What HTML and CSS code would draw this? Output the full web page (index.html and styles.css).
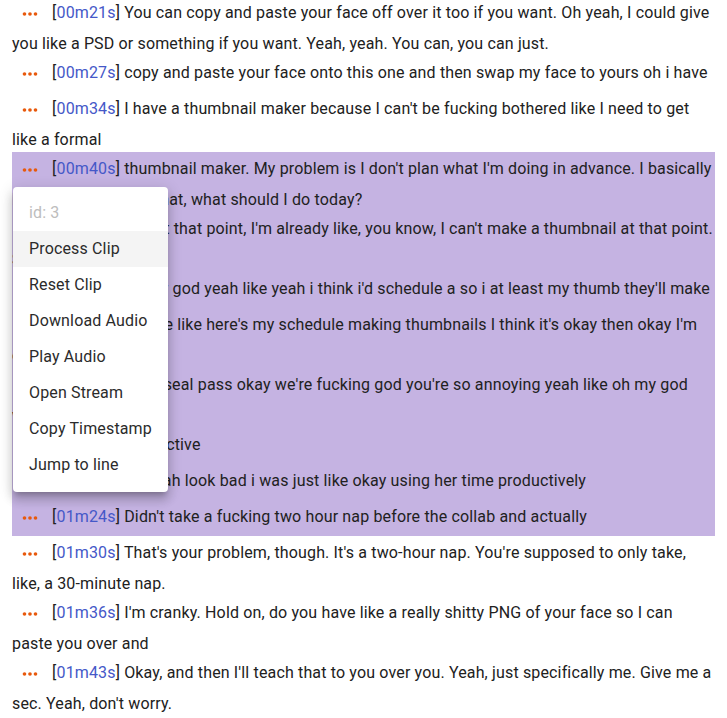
FILE: index.html
```html
<!DOCTYPE html>
<html lang="en">
<head>
<meta charset="utf-8">
<title>Transcript</title>
<link rel="stylesheet" href="styles.css">
</head>
<body>
<div class="transcript">
  <div class="seg"><span class="more"><svg viewBox="0 0 24 24"><circle cx="6" cy="12" r="2"/><circle cx="12" cy="12" r="2"/><circle cx="18" cy="12" r="2"/></svg></span> [<span class="ts">00m21s</span>] You can copy and paste your face off over it too if you want. Oh yeah, I could give you like a PSD or something if you want. Yeah, yeah. You can, you can just.</div>
  <div class="seg"><span class="more"><svg viewBox="0 0 24 24"><circle cx="6" cy="12" r="2"/><circle cx="12" cy="12" r="2"/><circle cx="18" cy="12" r="2"/></svg></span> [<span class="ts">00m27s</span>] copy and paste your face onto this one and then swap my face to yours oh i have</div>
  <div class="seg"><span class="more"><svg viewBox="0 0 24 24"><circle cx="6" cy="12" r="2"/><circle cx="12" cy="12" r="2"/><circle cx="18" cy="12" r="2"/></svg></span> [<span class="ts">00m34s</span>] I have a thumbnail maker because I can't be fucking bothered like I need to get like a formal</div>
  <div class="seg sel"><span class="more"><svg viewBox="0 0 24 24"><circle cx="6" cy="12" r="2"/><circle cx="12" cy="12" r="2"/><circle cx="18" cy="12" r="2"/></svg></span> [<span class="ts">00m40s</span>] thumbnail maker. My problem is I don't plan what I'm doing in advance. I basically I wake up and like, what, what should I do today?</div>
  <div class="seg sel"><span class="more"><svg viewBox="0 0 24 24"><circle cx="6" cy="12" r="2"/><circle cx="12" cy="12" r="2"/><circle cx="18" cy="12" r="2"/></svg></span> [<span class="ts">00m46s</span>] and at that point, I'm already like, you know, I can't make a thumbnail at that point. So I'm like</div>
  <div class="seg sel"><span class="more"><svg viewBox="0 0 24 24"><circle cx="6" cy="12" r="2"/><circle cx="12" cy="12" r="2"/><circle cx="18" cy="12" r="2"/></svg></span> [<span class="ts">00m52s</span>] oh my god yeah like yeah i think i'd schedule a so i at least my thumb they'll make</div>
  <div class="seg sel"><span class="more"><svg viewBox="0 0 24 24"><circle cx="6" cy="12" r="2"/><circle cx="12" cy="12" r="2"/><circle cx="18" cy="12" r="2"/></svg></span> [<span class="ts">00m58s</span>] and be like here's my schedule making thumbnails I think it's okay then okay I'm done</div>
  <div class="seg sel"><span class="more"><svg viewBox="0 0 24 24"><circle cx="6" cy="12" r="2"/><circle cx="12" cy="12" r="2"/><circle cx="18" cy="12" r="2"/></svg></span> [<span class="ts">01m05s</span>] what seal pass okay we're fucking god you're so annoying yeah like oh my god whatever</div>
  <div class="seg sel"><span class="more"><svg viewBox="0 0 24 24"><circle cx="6" cy="12" r="2"/><circle cx="12" cy="12" r="2"/><circle cx="18" cy="12" r="2"/></svg></span> [<span class="ts">01m12s</span>] productive</div>
  <div class="seg sel"><span class="more"><svg viewBox="0 0 24 24"><circle cx="6" cy="12" r="2"/><circle cx="12" cy="12" r="2"/><circle cx="18" cy="12" r="2"/></svg></span> [<span class="ts">01m18s</span>] oh yeah look bad i was just like okay using her time productively</div>
  <div class="seg sel"><span class="more"><svg viewBox="0 0 24 24"><circle cx="6" cy="12" r="2"/><circle cx="12" cy="12" r="2"/><circle cx="18" cy="12" r="2"/></svg></span> [<span class="ts">01m24s</span>] Didn't take a fucking two hour nap before the collab and actually</div>
  <div class="seg"><span class="more"><svg viewBox="0 0 24 24"><circle cx="6" cy="12" r="2"/><circle cx="12" cy="12" r="2"/><circle cx="18" cy="12" r="2"/></svg></span> [<span class="ts">01m30s</span>] That's your problem, though. It's a two-hour nap. You're supposed to only take, like, a 30-minute nap.</div>
  <div class="seg"><span class="more"><svg viewBox="0 0 24 24"><circle cx="6" cy="12" r="2"/><circle cx="12" cy="12" r="2"/><circle cx="18" cy="12" r="2"/></svg></span> [<span class="ts">01m36s</span>] I'm cranky. Hold on, do you have like a really shitty PNG of your face so I can paste you over and</div>
  <div class="seg"><span class="more"><svg viewBox="0 0 24 24"><circle cx="6" cy="12" r="2"/><circle cx="12" cy="12" r="2"/><circle cx="18" cy="12" r="2"/></svg></span> [<span class="ts">01m43s</span>] Okay, and then I'll teach that to you over you. Yeah, just specifically me. Give me a sec. Yeah, don't worry.</div>
</div>

<ul class="menu">
  <li class="menu-id">id: 3</li>
  <li class="menu-item hover">Process Clip</li>
  <li class="menu-item">Reset Clip</li>
  <li class="menu-item">Download Audio</li>
  <li class="menu-item">Play Audio</li>
  <li class="menu-item">Open Stream</li>
  <li class="menu-item">Copy Timestamp</li>
  <li class="menu-item">Jump to line</li>
</ul>
</body>
</html>
```

FILE: styles.css
```css
html, body {
  margin: 0;
  padding: 0;
  background: #ffffff;
}

body {
  font-family: Roboto, "Liberation Sans", sans-serif;
  font-size: 16px;
  letter-spacing: 0.00938em;
  color: #212121;
  overflow: hidden;
}

.transcript {
  padding: 0 12px;
  margin-top: -4px;
}

.seg {
  line-height: 24px;
}

.seg.sel {
  background: #c5b3e2;
}

.more {
  display: inline-block;
  width: 36px;
  height: 36px;
  vertical-align: middle;
  line-height: 0;
}

.more svg {
  display: block;
  width: 22px;
  height: 22px;
  margin: 7px auto;
  fill: #e8590c;
}

.ts {
  color: #4558c8;
}

.menu {
  position: absolute;
  left: 13px;
  top: 187px;
  width: 155px;
  margin: 0;
  padding: 8px 0 9px;
  list-style: none;
  background: #ffffff;
  border-radius: 4px;
  box-shadow: 0 5px 5px -3px rgba(0,0,0,0.2), 0 8px 10px 1px rgba(0,0,0,0.14), 0 3px 14px 2px rgba(0,0,0,0.12);
}

.menu-id,
.menu-item {
  height: 36px;
  line-height: 36px;
  padding: 0 16px;
  white-space: nowrap;
}

.menu-id {
  color: #bdbdbd;
}

.menu-item {
  color: #2b2b2b;
}

.menu-item.hover {
  background: #f4f4f4;
}
```
